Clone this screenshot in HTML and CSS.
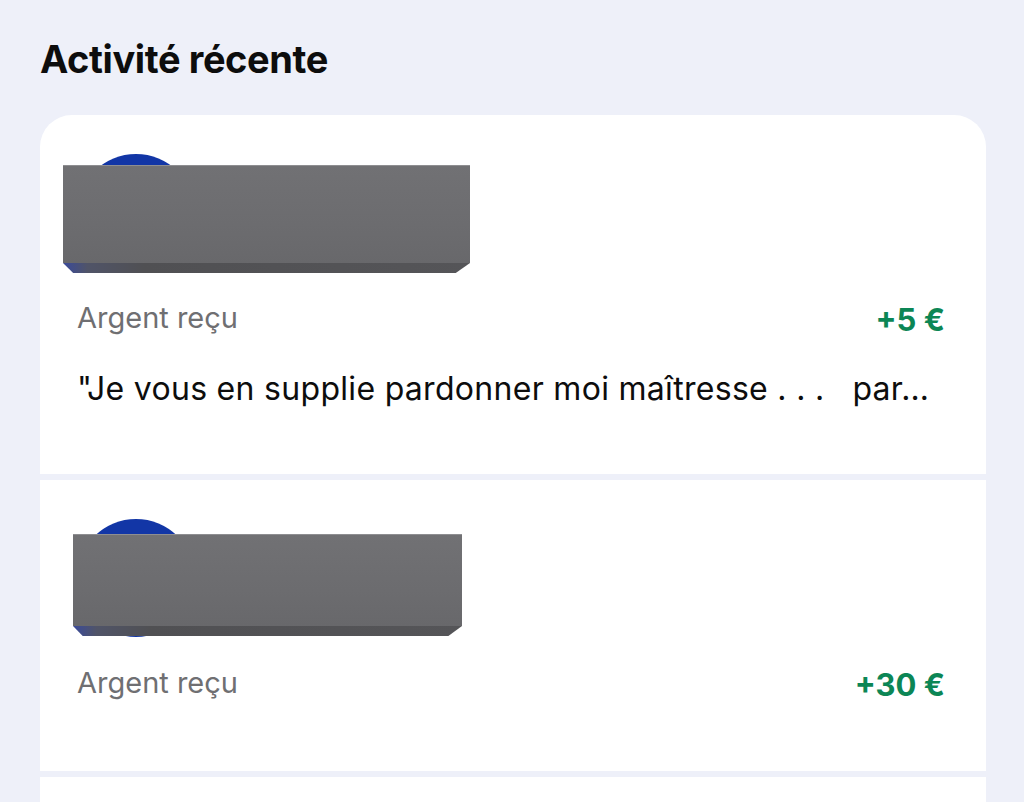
FILE: index.html
```html
<!DOCTYPE html>
<html lang="fr">
<head>
  <meta charset="UTF-8" />
  <title>Activité récente</title>
  <link rel="stylesheet" href="styles.css">
</head>
<body>

  <h1 class="title">Activité récente</h1>

  <div class="activity">

    <!-- Transaction 1 -->
    <div class="item first">
      <div class="avatar"></div>
      <div class="redact redact-a"></div>
      <div class="row">
        <span class="label">Argent reçu</span>
        <span class="amount">+5 €</span>
      </div>
      <p class="message">"Je vous en supplie pardonner moi maîtresse . . .   par…</p>
    </div>

    <!-- Transaction 2 -->
    <div class="item">
      <div class="avatar"></div>
      <div class="redact redact-b"></div>
      <div class="row">
        <span class="label">Argent reçu</span>
        <span class="amount">+30 €</span>
      </div>
    </div>

    <!-- Transaction 3 (continues below the fold) -->
    <div class="item"></div>

  </div>

</body>
</html>
```

FILE: styles.css
```css
body {
  margin: 0;
  background: #eef0f9;
  font-family: Inter, 'Liberation Sans', sans-serif;
  color: #111;
  overflow: hidden;
}

.title {
  margin: 36px 0 0 40px;
  font-size: 38px;
  line-height: 46px;
  font-weight: 700;
  letter-spacing: -0.4px;
  color: #0d0d0d;
}

.activity {
  margin: 33px 38px 0 40px;
  display: flex;
  flex-direction: column;
  gap: 6px;
}

.item {
  position: relative;
  background: #fff;
  padding: 39px 39px 66px 37px;
  min-height: 60px;
}

.item.first {
  border-radius: 32px 32px 0 0;
}

.avatar {
  width: 118px;
  height: 118px;
  border-radius: 50%;
  background: #1236a6;
}

/* grey block laid over the avatar and name */
.redact {
  position: absolute;
  background: linear-gradient(180deg, #717174 0%, #6c6c6f 60%, #68686b 100%);
  border-top: 1px solid #8e8e91;
}

.redact::after {
  content: "";
  position: absolute;
  left: 0;
  right: 0;
  top: 100%;
  height: 10px;
  background: linear-gradient(90deg, #3a4a9a 0%, #505468 6%, #505053 20%, #555558 100%);
  clip-path: polygon(0 0, 100% 0, 96.5% 100%, 2.5% 100%);
}

.redact-a {
  left: 23px;
  top: 50px;
  width: 407px;
  height: 97px;
}

.redact-b {
  left: 33px;
  top: 54px;
  width: 389px;
  height: 91px;
}

.row {
  display: flex;
  justify-content: space-between;
  align-items: baseline;
  margin: 28px 2px 5px 0;
}

.label {
  font-size: 29px;
  line-height: 34px;
  color: #6f6f72;
}

.amount {
  font-size: 31px;
  line-height: 34px;
  font-weight: 700;
  color: #0c8655;
  position: relative;
  top: 3px;
}

.message {
  margin: 35px 0 0 0;
  font-size: 32px;
  line-height: 38px;
  letter-spacing: 0.3px;
  color: #0d0d0d;
  white-space: pre;
  overflow: hidden;
  text-overflow: ellipsis;
}
```
